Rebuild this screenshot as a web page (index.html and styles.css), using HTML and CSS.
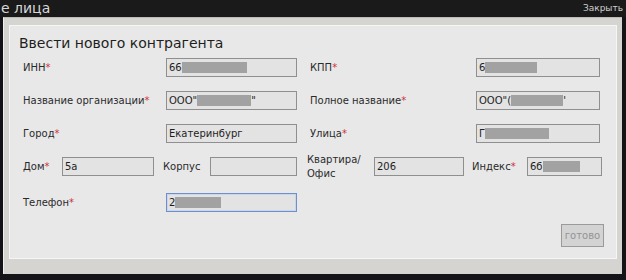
FILE: index.html
```html
<!DOCTYPE html>
<html lang="ru">
<head>
<meta charset="utf-8">
<link rel="stylesheet" href="styles.css">
</head>
<body>
<div class="topbar">
  <span class="page-title">е лица</span>
  <span class="close">Закрыть</span>
</div>
<div class="frame">
  <div class="panel">
    <div class="title">Ввести нового контрагента</div>
    <div class="row">
      <label class="lbl w143">ИНН<span class="req">*</span></label>
      <div class="inp w131">66<span class="mask m65"></span></div>
      <label class="lbl w166 ml13">КПП<span class="req">*</span></label>
      <div class="inp w124">6<span class="mask m52"></span></div>
    </div>
    <div class="row">
      <label class="lbl w143">Название организации<span class="req">*</span></label>
      <div class="inp w131">ООО"<span class="mask m54"></span>"</div>
      <label class="lbl w166 ml13">Полное название<span class="req">*</span></label>
      <div class="inp w124">ООО"(<span class="mask m52"></span>'</div>
    </div>
    <div class="row">
      <label class="lbl w143">Город<span class="req">*</span></label>
      <div class="inp w131">Екатеринбург</div>
      <label class="lbl w166 ml13">Улица<span class="req">*</span></label>
      <div class="inp w124">Г<span class="mask m64"></span></div>
    </div>
    <div class="row row4">
      <label class="lbl w39">Дом<span class="req">*</span></label>
      <div class="inp w92">5а</div>
      <label class="lbl w47 ml9">Корпус</label>
      <div class="inp w87"></div>
      <label class="lbl w67 ml10 two">Квартира/<br>Офис</label>
      <div class="inp w90">206</div>
      <label class="lbl w55 ml8">Индекс<span class="req">*</span></label>
      <div class="inp w75">6б<span class="mask m37"></span></div>
    </div>
    <div class="row row5">
      <label class="lbl w143">Телефон<span class="req">*</span></label>
      <div class="inp w131 focus">2<span class="mask m46"></span></div>
    </div>
    <div class="actions">
      <button class="btn">готово</button>
    </div>
  </div>
</div>
</body>
</html>
```
FILE: styles.css
```css
html, body {
  margin: 0;
  padding: 0;
}
body {
  width: 626px;
  height: 280px;
  background: #131318;
  font-family: "DejaVu Sans", Tahoma, sans-serif;
  overflow: hidden;
}
.topbar {
  height: 17px;
  background: #1a1a1a;
  display: flex;
  justify-content: space-between;
  align-items: flex-start;
}
.page-title {
  color: #d8d8d8;
  font-size: 14px;
  line-height: 16px;
  margin-left: 1px;
}
.close {
  color: #cfcfcf;
  font-size: 9px;
  line-height: 10px;
  margin-top: 3px;
  margin-right: 3px;
}
.frame {
  margin: 0 4px 0 3px;
  height: 257px;
  box-sizing: border-box;
  background: #d6d4d0;
  border-top: 1px solid #bdbbb6;
  border-left: 1px solid #efefef;
  padding: 7px 5px 15px 5px;
}
.panel {
  height: 234px;
  box-sizing: border-box;
  background: #e8e8e8;
  border: 1px solid #f6f6f6;
  padding: 9px 12px 0 9px;
  display: flex;
  flex-direction: column;
}
.title {
  font-size: 14px;
  line-height: 17px;
  color: #1e1e1e;
  margin-bottom: 6px;
}
.row {
  display: flex;
  align-items: center;
  height: 19px;
  margin-left: 4px;
  margin-bottom: 14px;
}
.row4 { margin-bottom: 17px; }
.row5 { margin-bottom: 0; }
.lbl {
  font-size: 10px;
  color: #2a2a2a;
  line-height: 13px;
  flex: none;
}
.two { line-height: 14px; margin-top: 1px; }
.req { color: #d0303a; }
.inp {
  flex: none;
  height: 19px;
  box-sizing: border-box;
  border: 1px solid #8f8f8f;
  background: #e3e3e3;
  font-size: 10px;
  color: #1e1e1e;
  padding: 0 2px;
  display: flex;
  align-items: center;
  line-height: 13px;
}
.inp.focus {
  border-color: #6f8fc8;
  box-shadow: 0 0 0 1px #c9d6ee inset;
}
.mask {
  display: inline-block;
  height: 11px;
  background: #a2a2a2;
}
.m65 { width: 65px; }
.m52 { width: 52px; }
.m54 { width: 54px; }
.m64 { width: 64px; }
.m37 { width: 37px; }
.m46 { width: 46px; }
.w39 { width: 39px; }
.w47 { width: 47px; }
.w55 { width: 55px; }
.w67 { width: 67px; }
.w75 { width: 75px; }
.w87 { width: 87px; }
.w90 { width: 90px; }
.w92 { width: 92px; }
.w124 { width: 124px; }
.w131 { width: 131px; }
.w143 { width: 143px; }
.w166 { width: 166px; }
.ml8 { margin-left: 8px; }
.ml9 { margin-left: 9px; }
.ml10 { margin-left: 10px; }
.ml13 { margin-left: 13px; }
.actions {
  display: flex;
  justify-content: flex-end;
  margin-top: 12px;
}
.btn {
  width: 43px;
  height: 23px;
  box-sizing: border-box;
  border: 1px solid #9a9a9a;
  background: #d3d3d3;
  color: #939393;
  font-family: "DejaVu Sans", Tahoma, sans-serif;
  font-size: 10px;
  padding: 0;
}
```
